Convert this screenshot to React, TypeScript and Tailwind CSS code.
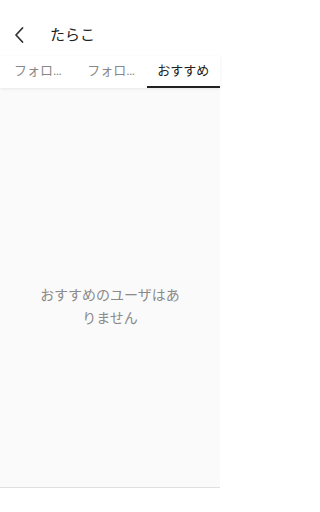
import React from "react";

const font = { fontFamily: 'Roboto, "Noto Sans CJK JP", "Noto Sans", sans-serif' };

export default function App() {
  const tabs = ["フォロー中", "フォロワー", "おすすめ"];
  return (
    <div className="w-[220px] h-[512px] flex flex-col bg-white" style={font}>
      <div className="h-[56px] flex items-center bg-white shrink-0 pt-[14px]">
        <div className="w-[50px] flex items-center justify-start pl-[13px]">
          <svg width="12" height="18" viewBox="0 0 12 18" fill="none">
            <path d="M9.5 2 L3 9 L9.5 16" stroke="#333" strokeWidth="1.8" strokeLinecap="round" strokeLinejoin="round" />
          </svg>
        </div>
        <div className="text-[15px] text-[#222]">たらこ</div>
      </div>
      <div className="h-[32px] grid grid-cols-3 bg-white shrink-0 relative z-10 shadow-[0_1px_3px_rgba(0,0,0,0.08)]">
        {tabs.map((t, i) => (
          <div
            key={t}
            className={
              i === 2
                ? "min-w-0 flex items-center justify-center border-b-2 border-[#222] text-[13px] text-[#222] whitespace-nowrap"
                : "min-w-0 flex items-center justify-start pl-[14px] pr-[6px] border-b-2 border-transparent text-[13px] text-[#888]"
            }
          >
            <span className={i === 2 ? "block" : "truncate block"}>{t}</span>
          </div>
        ))}
      </div>
      <div className="flex-1 bg-[#fafafa] flex items-center justify-center px-[36px] pt-[38px]">
        <p className="text-[14px] leading-[23px] text-[#8a8a8a] text-center">
          おすすめのユーザはありません
        </p>
      </div>
      <div className="h-[25px] bg-white border-t border-[#e0e0e0] shrink-0" />
    </div>
  );
}
